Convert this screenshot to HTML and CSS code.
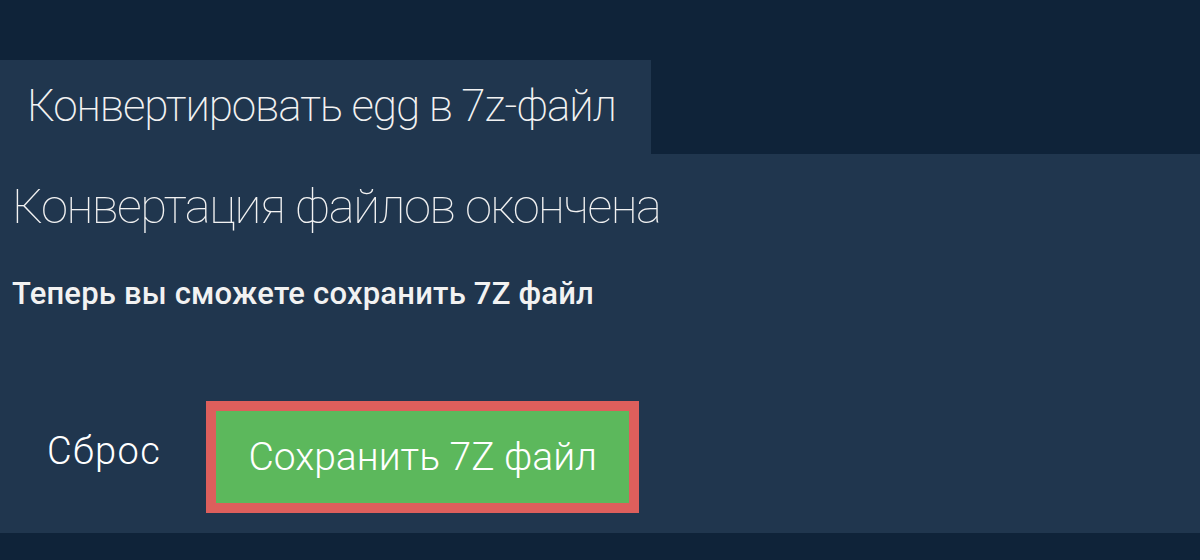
FILE: index.html
```html
<!DOCTYPE html>
<html lang="ru">
<head>
  <meta charset="UTF-8" />
  <meta name="viewport" content="width=device-width, initial-scale=1.0" />
  <title>Конвертировать egg в 7z-файл</title>
  <link rel="stylesheet" href="styles.css">
</head>
<body>
  <div class="tab">Конвертировать egg в 7z-файл</div>
  <div class="panel">
    <h2>Конвертация файлов окончена</h2>
    <p class="note">Теперь вы сможете сохранить 7Z файл</p>
    <div class="actions">
      <button class="reset">Сброс</button>
      <button class="save">Сохранить 7Z файл</button>
    </div>
  </div>
</body>
</html>
```

FILE: styles.css
```css
body {
  font-family: 'Roboto', 'Liberation Sans', sans-serif;
  background-color: #0f2339;
  color: #f2f2f2;
  margin: 0;
  padding: 60px 0 0;
  height: 500px;
}
.tab {
  width: 651px;
  height: 94px;
  box-sizing: border-box;
  padding: 16px 0 0 27px;
  background: #20364e;
  font-size: 44px;
  font-weight: 200;
  letter-spacing: -1.1px;
  line-height: 60px;
  white-space: nowrap;
}
.panel {
  background: #20364e;
  height: 379px;
  padding: 0 12px;
}
h2 {
  margin: 0;
  padding-top: 22px;
  font-size: 49px;
  font-weight: 100;
  letter-spacing: -1.5px;
  line-height: 62px;
}
.note {
  margin: 36px 0 0;
  font-size: 31px;
  font-weight: 500;
  letter-spacing: 0.2px;
  line-height: 40px;
}
.actions {
  display: flex;
  align-items: center;
  gap: 45px;
  margin-top: 87px;
}
button {
  font-family: inherit;
  color: white;
  cursor: pointer;
}
.reset {
  background: none;
  border: none;
  padding: 0 0 12px 35px;
  font-size: 38px;
  font-weight: 300;
  letter-spacing: 1.4px;
}
.save {
  width: 433px;
  height: 112px;
  background-color: #5cb85c;
  border: 10px solid #dd5f5c;
  font-size: 39px;
  font-weight: 300;
}
```
